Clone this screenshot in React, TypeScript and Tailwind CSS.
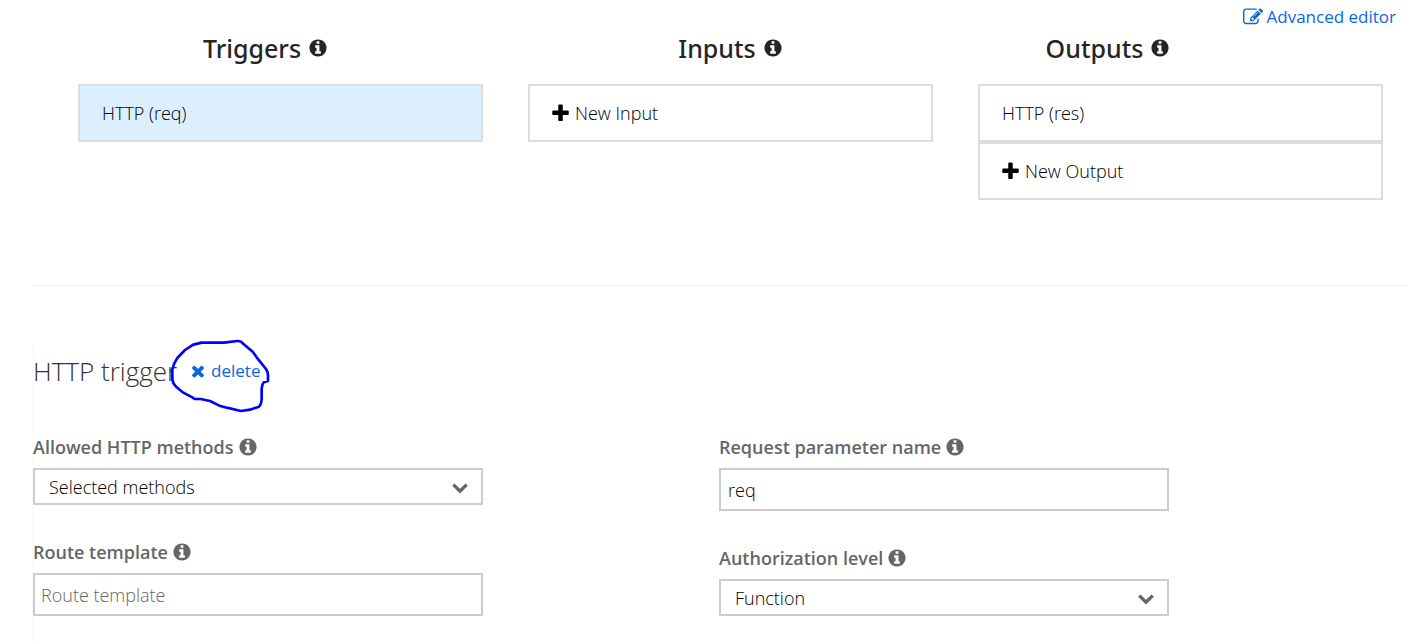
import { ReactNode } from "react";

const icons = {
  info: "M1152 1376v-160q0-14-9-23t-23-9h-96v-512q0-14-9-23t-23-9h-320q-14 0-23 9t-9 23v160q0 14 9 23t23 9h96v320h-96q-14 0-23 9t-9 23v160q0 14 9 23t23 9h448q14 0 23-9t9-23zm-128-896v-160q0-14-9-23t-23-9h-192q-14 0-23 9t-9 23v160q0 14 9 23t23 9h192q14 0 23-9t9-23zm640 416q0 209-103 385.5t-279.5 279.5-385.5 103-385.5-103-279.5-279.5-103-385.5 103-385.5 279.5-279.5 385.5-103 385.5 103 279.5 279.5 103 385.5z",
  plus: "M1600 736v192q0 40-28 68t-68 28h-416v416q0 40-28 68t-68 28h-192q-40 0-68-28t-28-68v-416h-416q-40 0-68-28t-28-68v-192q0-40 28-68t68-28h416v-416q0-40 28-68t68-28h192q40 0 68 28t28 68v416h416q40 0 68 28t28 68z",
  times:
    "M1490 1322q0 40-28 68l-136 136q-28 28-68 28t-68-28l-294-294-294 294q-28 28-68 28t-68-28l-136-136q-28-28-28-68t28-68l294-294-294-294q-28-28-28-68t28-68l136-136q28-28 68-28t68 28l294 294 294-294q28-28 68-28t68 28l136 136q28 28 28 68t-28 68l-294 294 294 294q28 28 28 68z",
  edit: "M888 1184l116-116-152-152-116 116v56h96v96h56zm440-720q-16-16-33 1l-350 350q-17 17-1 33t33-1l350-350q17-17 1-33zm80 594v190q0 119-84.5 203.5t-203.5 84.5h-832q-119 0-203.5-84.5t-84.5-203.5v-832q0-119 84.5-203.5t203.5-84.5h832q63 0 117 25 15 7 18 23 3 17-9 29l-49 49q-14 14-32 8-23-6-45-6h-832q-66 0-113 47t-47 113v832q0 66 47 113t113 47h832q66 0 113-47t47-113v-126q0-13 9-22l64-64q15-15 35-7t20 29zm-96-738l288 288-672 672h-288v-288zm444 132l-92 92-288-288 92-92q28-28 68-28t68 28l152 152q28 28 28 68t-28 68z",
};

function Icon({ name, className }: { name: keyof typeof icons; className: string }) {
  return (
    <svg viewBox="0 0 1792 1792" fill="currentColor" aria-hidden="true" className={`shrink-0 ${className}`}>
      <path d={icons[name]} />
    </svg>
  );
}

function Column({ title, headingClass, children }: { title: string; headingClass: string; children: ReactNode }) {
  return (
    <section className="pl-[45px]">
      <h2 className={`flex h-9 items-center justify-center gap-[7px] font-['Noto_Sans',sans-serif] text-[25px] font-medium text-[#252525] ${headingClass}`}>
        {title}
        <Icon name="info" className="size-5" />
      </h2>
      <div className="mt-[18px] flex flex-col">{children}</div>
    </section>
  );
}

function Binding({ children, selected = false, add = false }: { children: ReactNode; selected?: boolean; add?: boolean }) {
  return (
    <button
      type="button"
      className={`flex h-[58px] items-center gap-1 border-2 border-[#ddd] text-left ${add ? "pl-5" : "pl-[22px]"} ${
        selected ? "bg-[#dceffe]" : "bg-white"
      }`}
    >
      {add && <Icon name="plus" className="size-[21px]" />}
      {children}
    </button>
  );
}

function Field({ id, label, children }: { id: string; label: string; children: ReactNode }) {
  return (
    <div className="w-full max-w-[450px]">
      <label htmlFor={id} className="mb-[7px] flex h-7 items-center gap-1 font-semibold text-[#666]">
        {label}
        <Icon name="info" className="size-5" />
      </label>
      {children}
    </div>
  );
}

function Select({ id, options }: { id: string; options: string[] }) {
  return (
    <div className="relative">
      <select id={id} className="block h-[37px] w-full appearance-none border-2 border-[#ccc] bg-white pl-[14px] pr-10">
        {options.map((o) => (
          <option key={o}>{o}</option>
        ))}
      </select>
      <svg
        viewBox="0 0 16 11"
        fill="none"
        stroke="#666"
        strokeWidth="3.4"
        aria-hidden="true"
        className="pointer-events-none absolute right-[15px] top-[15px] h-[11px] w-4"
      >
        <path d="M1.3 1.6 8 8.2 14.7 1.6" />
      </svg>
    </div>
  );
}

export default function App() {
  return (
    <main className="min-h-screen bg-white font-['Open_Sans','Noto_Sans',sans-serif] text-[18px] font-light leading-6 text-black">
      <div className="flex justify-end pr-[11px] pt-[5px]">
        <a href="#advanced" className="flex items-center gap-1 text-[17px] font-normal text-[#0a66de]">
          <Icon name="edit" className="size-5" />
          Advanced editor
        </a>
      </div>

      <div className="mt-px grid grid-cols-3 pl-[33px] pr-6">
        <Column title="Triggers" headingClass="-ml-[30px]">
          <Binding selected>HTTP (req)</Binding>
        </Column>
        <Column title="Inputs" headingClass="">
          <Binding add>New Input</Binding>
        </Column>
        <Column title="Outputs" headingClass="pr-[145px]">
          <Binding>HTTP (res)</Binding>
          <Binding add>New Output</Binding>
        </Column>
      </div>

      <hr className="ml-[33px] mt-[85px] border-[#eee]" />

      <section className="ml-8 mt-[58px] border-l border-[#fafafa] pb-7 pr-0.5">
        <div className="flex h-[53px] items-center gap-3">
          <h3 className="text-[26px] text-[#333]">HTTP trigger</h3>
          <div className="relative">
            <button type="button" className="flex items-center gap-1 text-[17px] font-normal text-[#0a66de]">
              <Icon name="times" className="size-[18px]" />
              delete
            </button>
            <svg
              viewBox="0 0 360 270"
              fill="none"
              stroke="#00f"
              strokeWidth="8"
              strokeLinejoin="round"
              aria-hidden="true"
              className="pointer-events-none absolute -left-[29px] -top-[29px] h-[90px] w-[120px] max-w-none"
            >
              <path d="M125 38H192L232 33Q243 32 248 40L278 65 290 82 318 117Q325 128 324 140V153L311 157Q306 163 305 175V205Q305 222 297 230L270 239 243 243 200 233 178 227 150 213 122 207H104L97 202 70 188 50 172Q38 160 37 148V118Q42 98 52 84L75 60 100 44Z" />
            </svg>
          </div>
        </div>

        <div className="mt-9 grid grid-cols-2 items-start">
          <div className="flex flex-col gap-[33px]">
            <Field id="methods" label="Allowed HTTP methods">
              <Select id="methods" options={["Selected methods", "All methods"]} />
            </Field>
            <Field id="route" label="Route template">
              <input
                id="route"
                type="text"
                placeholder="Route template"
                className="block h-[43px] w-full border-2 border-[#ccc] px-1.5 placeholder:text-[#666]"
              />
            </Field>
          </div>
          <div className="flex flex-col gap-[33px]">
            <Field id="param" label="Request parameter name">
              <input id="param" type="text" defaultValue="req" className="block h-[43px] w-full border-2 border-[#ccc] px-[7px]" />
            </Field>
            <Field id="auth" label="Authorization level">
              <Select id="auth" options={["Function", "Anonymous", "Admin"]} />
            </Field>
          </div>
        </div>
      </section>
    </main>
  );
}
